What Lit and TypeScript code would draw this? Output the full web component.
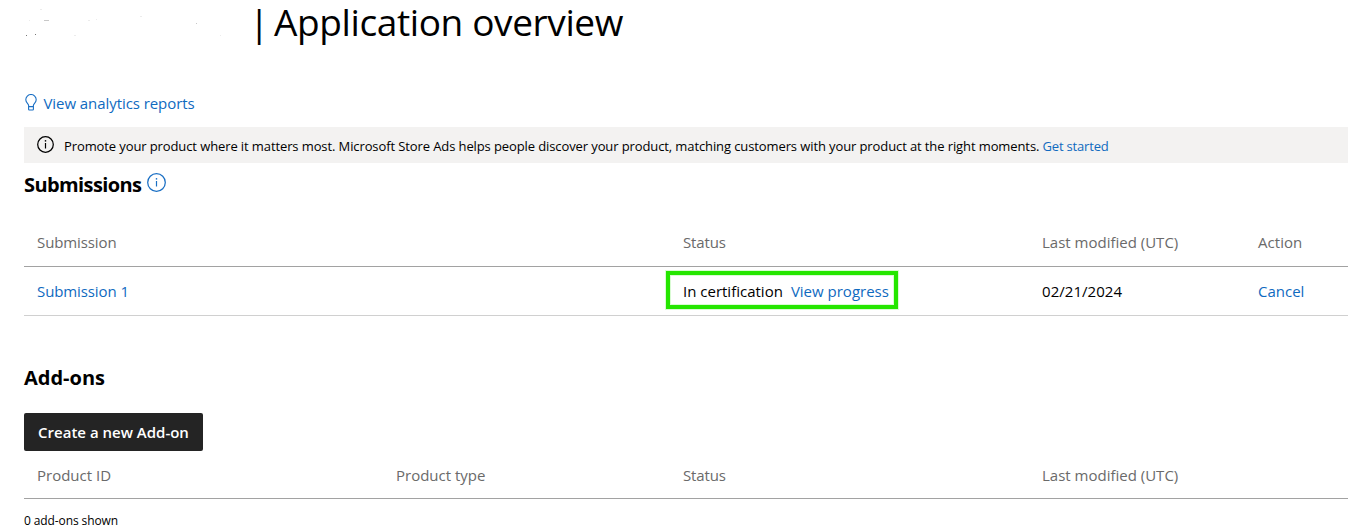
import { LitElement, html, css, svg } from "lit";
import { customElement, property } from "lit/decorators.js";

@customElement("info-icon")
class InfoIcon extends LitElement {
  @property({ type: Number }) size = 17;

  static styles = css`
    :host { display: block; flex: none; }
    svg { display: block; }
  `;

  render() {
    const s = this.size;
    const c = s / 2;
    return html`<svg width=${s} height=${s} fill="none" stroke="currentColor">
      ${svg`<circle cx=${c} cy=${c} r=${c - 0.7} stroke-width="1.25"></circle>
      <path d=${`M${c} ${c - 1.5}V${c + 4}`} stroke-width="1.2"></path>
      <path d=${`M${c} ${c - 4.4}v1.5`} stroke-width="1.4"></path>`}
    </svg>`;
  }
}

@customElement("app-root")
class AppRoot extends LitElement {
  static styles = css`
    :host {
      display: block;
      height: 530px;
      box-sizing: border-box;
      padding-left: 24px;
      background: #fff;
      color: #000;
      font: 15px/20px "Open Sans", "Noto Sans", sans-serif;
      white-space: nowrap;
    }
    a { color: #0f6abf; text-decoration: none; cursor: pointer; }
    h1, h2 { margin: 0; }
    .title { display: flex; height: 44px; font-size: 37px; line-height: 44px; font-weight: 400; }
    .name { width: 225px; flex: none; }
    .bar { width: 25px; flex: none; }
    .title-text { letter-spacing: -0.38px; }
    .analytics { display: flex; margin-top: 49px; height: 20px; letter-spacing: -0.07px; }
    .bulb { display: block; margin: 1px 6.5px 0 1px; color: #1a6fc4; }
    .banner {
      display: flex; align-items: center; height: 36px; margin-top: 14px; padding-left: 13px;
      background: #f3f2f1; font-size: 13px; letter-spacing: -0.105px;
    }
    .banner info-icon { margin: 0 10px 1px 0; }
    .banner-text { padding-top: 2px; }
    .banner a { letter-spacing: -0.18px; }
    .heading { display: flex; font-size: 20px; line-height: 28px; font-weight: 700; }
    .submissions { margin-top: 8px; letter-spacing: -0.6px; }
    .submissions info-icon { color: #1a6fc4; margin: 2px 0 0 6px; }
    .addons { margin-top: 48px; }
    .row {
      display: grid; grid-template-columns: 359px 287px 359px 216px 1fr;
      height: 48px; line-height: 48px; border-bottom: 1px solid #d0d0d0;
    }
    .row > div { padding-left: 13px; }
    .head { color: #6a6a6a; border-color: #a2a2a2; }
    .first { margin-top: 19px; }
    .second { height: 46px; padding-top: 1px; line-height: 46px; }
    .tight { letter-spacing: -0.12px; }
    .slim { letter-spacing: -0.1px; }
    .loose { letter-spacing: 0.05px; }
    .status { position: relative; }
    .status a { margin-left: 8px; }
    .highlight {
      position: absolute; left: -4px; top: 4px; width: 232px; height: 38px;
      box-sizing: border-box; border: 4px solid #25e600;
      box-shadow: 0 0 0 1px #d9fbd3, inset 0 0 0 1px #d9fbd3; pointer-events: none;
    }
    .create {
      display: block; width: 179px; height: 38px; margin: 21px 0 0; padding: 0;
      border: 0; border-radius: 2px; background: #242424; color: #fff;
      font: 600 15px/38px "Open Sans", "Noto Sans", sans-serif;
    }
    .count { margin-top: 14px; height: 16px; font-size: 12px; line-height: 16px; letter-spacing: -0.1px; }
  `;

  render() {
    return html`
      <h1 class="title">
        <svg class="name" height="44" viewBox="24 0 225 44" shape-rendering="crispEdges">
          <path fill="#ececec" d="M40 9h2v1h-2zM29 20h1v1h-1zM88 20h2v1h-2zM96 19h1v1h-1zM140 16h2v1h-2zM74 35h2v1h-2zM220 35h1v1h-1z"></path>
          <path fill="#c8c8c8" d="M44 20h5v1h-5zM196 23h1v1h-1z"></path>
          <path fill="#777" d="M26 35h1v1h-1zM35 34h1v1h-1z"></path>
        </svg>
        <span class="bar">|</span><span class="title-text">Application overview</span>
      </h1>
      <div class="analytics">
        <svg class="bulb" width="12" height="17" fill="none" stroke="currentColor" stroke-width="1.1">
          <path d="M3.6 12.2V11.2C3.4 9.4 .8 8.7 .8 5.7A5.2 5.2 0 0 1 11.2 5.7C11.2 8.7 8.6 9.4 8.4 11.2V15.3Q8.4 16 7.7 16H4.3Q3.6 16 3.6 15.3ZM3.6 12.6H8.4"></path>
        </svg>
        <a>View analytics reports</a>
      </div>
      <div class="banner">
        <info-icon size="17"></info-icon>
        <div class="banner-text">Promote your product where it matters most. Microsoft Store Ads helps people discover your product, matching customers with your product at the right moments. <a>Get started</a></div>
      </div>
      <h2 class="heading submissions">Submissions<info-icon size="19"></info-icon></h2>
      <div class="row head first">
        <div class="slim">Submission</div><div></div><div class="tight">Status</div><div>Last modified (UTC)</div><div class="loose">Action</div>
      </div>
      <div class="row">
        <div class="slim"><a>Submission 1</a></div><div></div>
        <div class="status">In certification<a>View progress</a><span class="highlight"></span></div>
        <div class="loose">02/21/2024</div><div><a>Cancel</a></div>
      </div>
      <h2 class="heading addons">Add-ons</h2>
      <button class="create">Create a new Add-on</button>
      <div class="row head second">
        <div>Product ID</div><div>Product type</div><div class="tight">Status</div><div>Last modified (UTC)</div><div></div>
      </div>
      <div class="count">0 add-ons shown</div>
    `;
  }
}
